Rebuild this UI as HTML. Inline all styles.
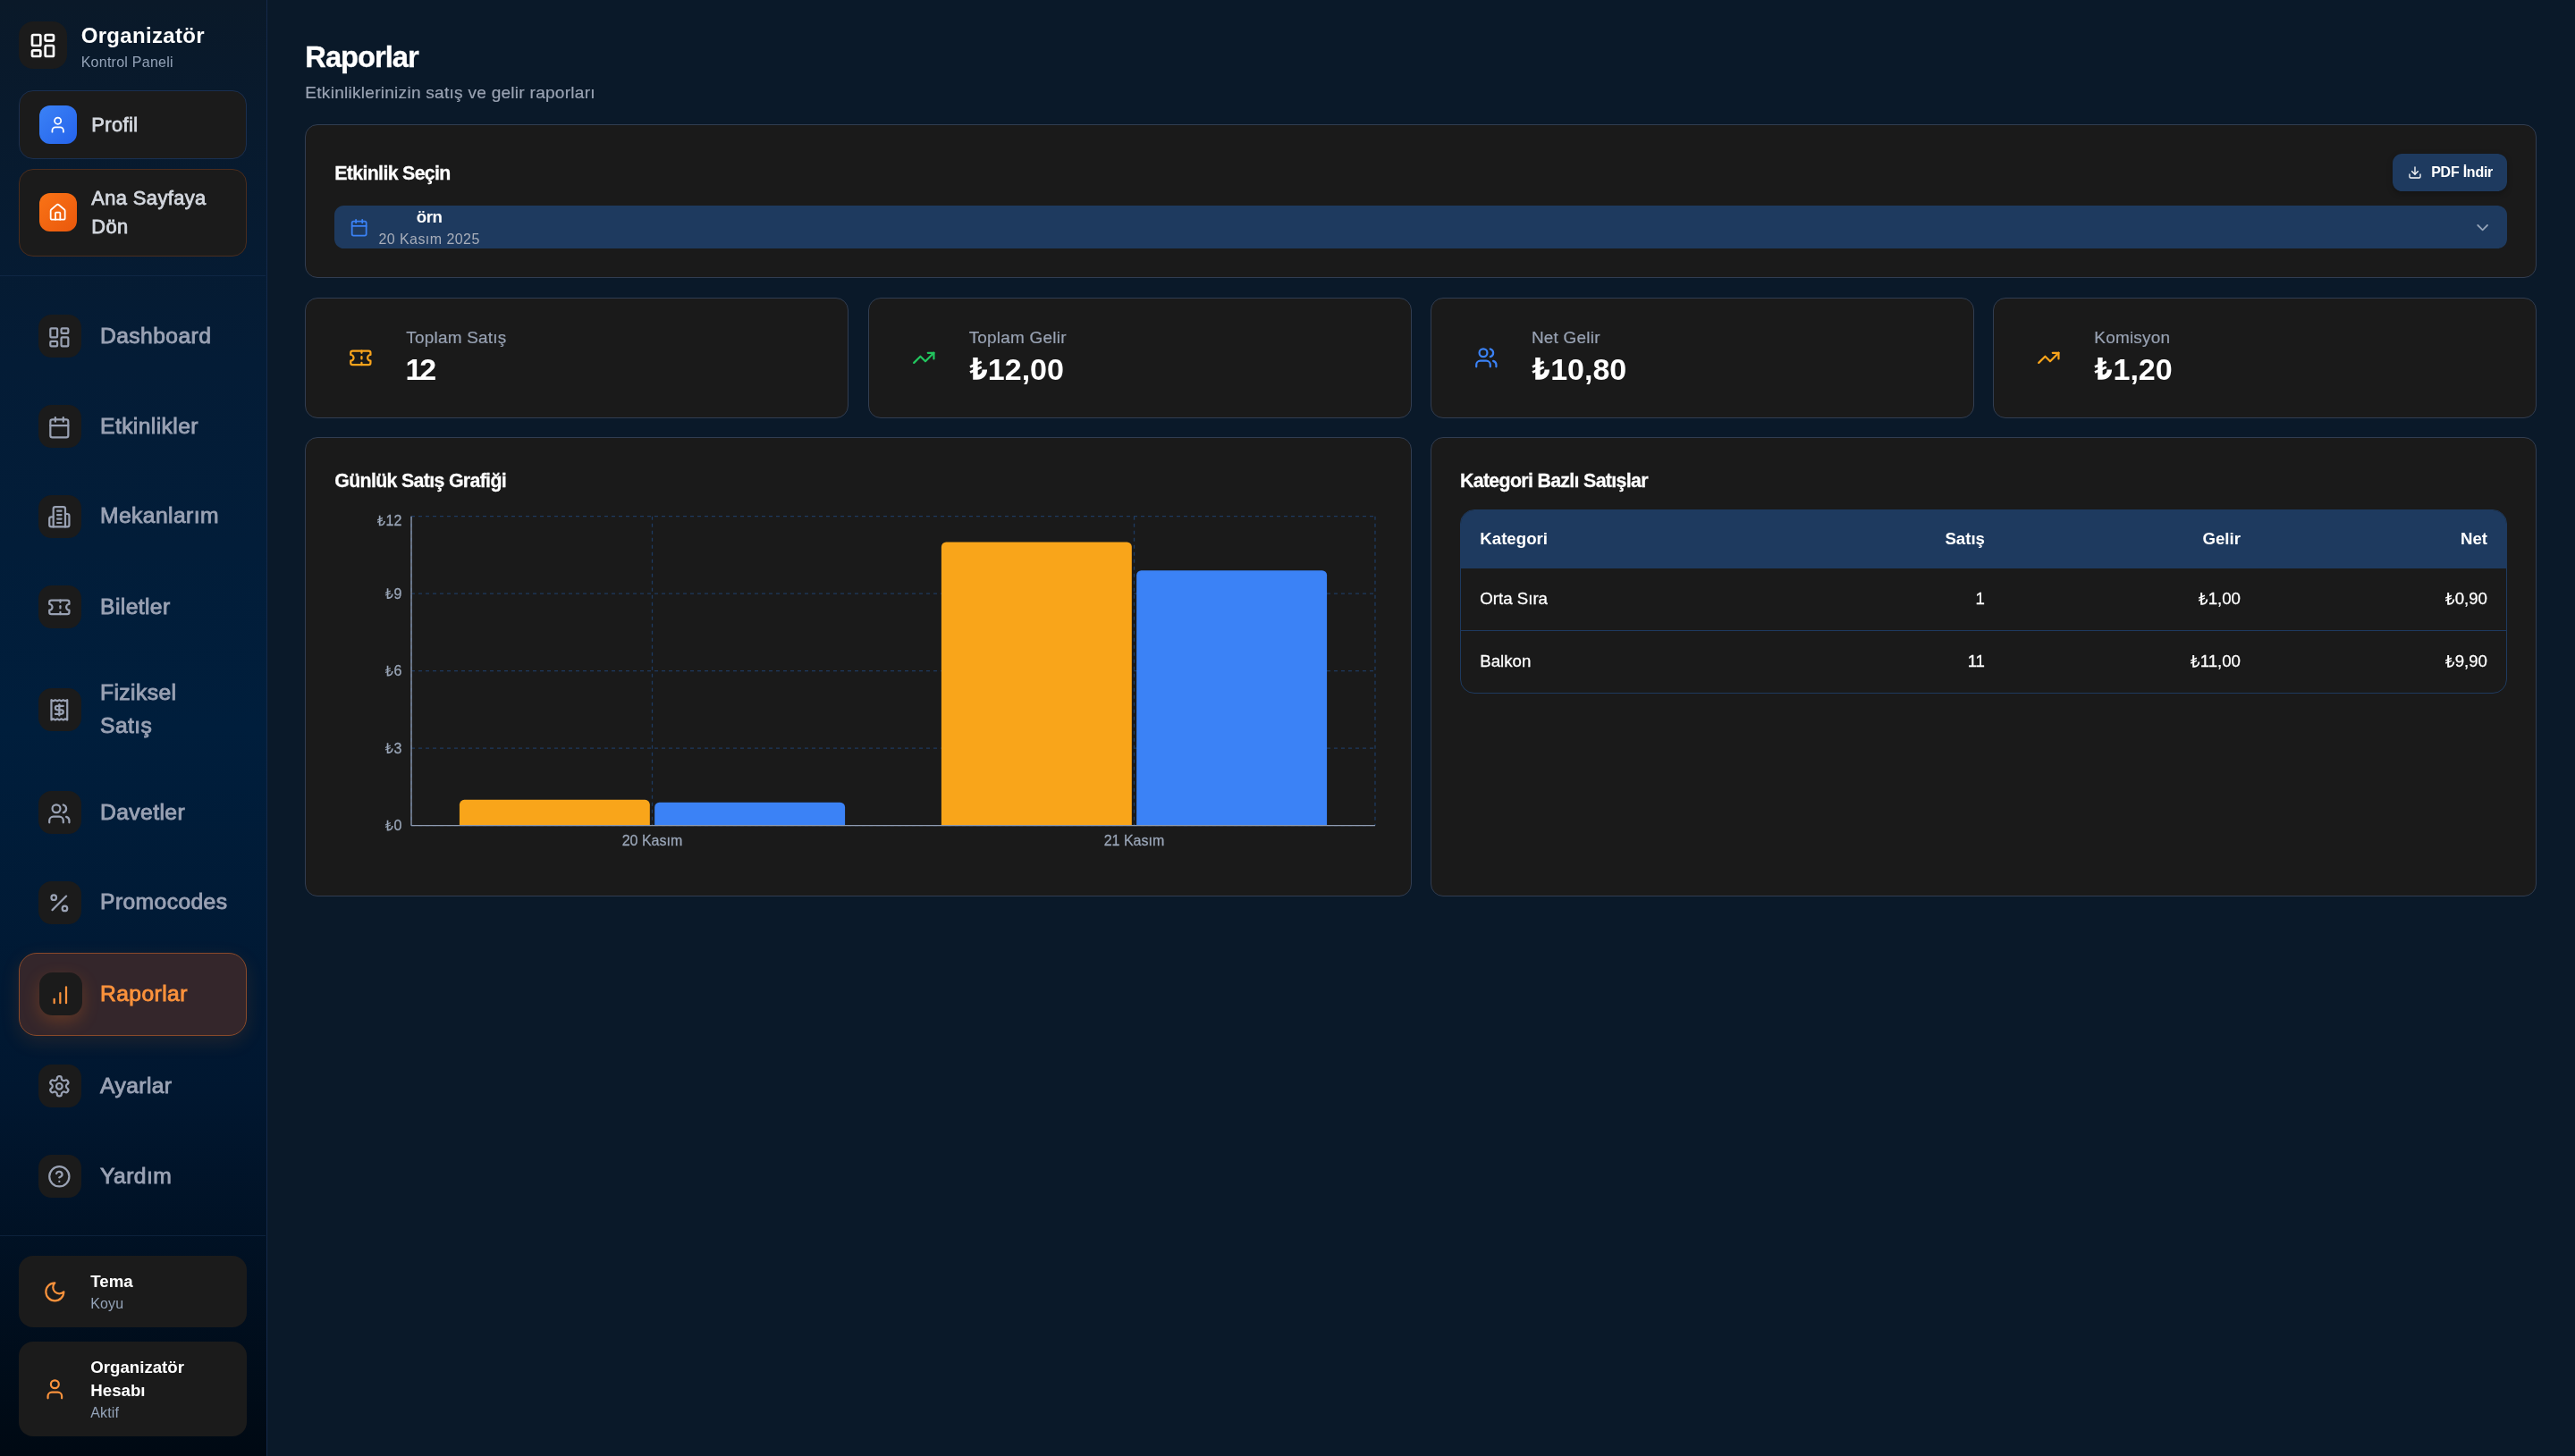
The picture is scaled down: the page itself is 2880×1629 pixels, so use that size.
<!DOCTYPE html>
<html lang="tr">
<head>
<meta charset="utf-8">
<title>Raporlar</title>
<style>
*{box-sizing:border-box;margin:0;padding:0}
html,body{width:2880px;height:1629px;overflow:hidden;background:#0a1929}
body{font-family:"Liberation Sans",sans-serif;color:#fff;-webkit-font-smoothing:antialiased}
#app{will-change:transform;zoom:1.3333333;position:relative;width:2160px;height:1221.75px;overflow:hidden;
 background:#0a1929}
svg.i{fill:none;stroke:currentColor;stroke-width:2;stroke-linecap:round;stroke-linejoin:round;display:block}
/* sidebar */
#sb{position:absolute;left:0;top:0;width:224px;height:1221.75px;border-right:1px solid #14294a;
 background:linear-gradient(180deg,#0a1929 0%,#041c36 25%,#001e3c 50%,#011730 75%,#000913 100%)}
.hd{position:absolute;left:16px;top:16px;display:flex;align-items:center;gap:12px}
.logo{width:40px;height:40px;border-radius:12px;background:#1b1b1b;display:flex;align-items:center;justify-content:center;color:#fff}
.hd b{display:block;font-size:18px;line-height:28px;font-weight:700;color:#fff;letter-spacing:.26px}
.hd span{display:block;font-size:12px;line-height:16px;color:#94a3b8;letter-spacing:.2px}
.qb{position:absolute;left:16px;width:191px;border-radius:12px;background:#1b1b1b;border:1px solid #1a2f4f;display:flex;align-items:center;gap:12px;padding:12px 16px;font-size:16.4px;line-height:24px;font-weight:400;-webkit-text-stroke:.6px currentColor;letter-spacing:.3px;color:#d3d7de}
.qi{width:32px;height:32px;border-radius:9px;display:flex;align-items:center;justify-content:center;color:#fff;flex:none}
.sep{position:absolute;left:0;width:223px;height:1px;background:rgba(30,58,95,.4)}
.ni{position:absolute;left:16px;width:191px;height:70px;border-radius:15px;border:1px solid transparent;display:flex;align-items:center;gap:16px;padding:0 15.3px;font-size:18.5px;line-height:28px;font-weight:400;-webkit-text-stroke:.65px currentColor;letter-spacing:.3px;color:#9aa2b4}
.ni>div:last-child{position:relative;top:-.5px}
.nb svg{position:relative;top:.5px}
.nb{width:36px;height:36px;border-radius:11px;background:#1b1b1b;display:flex;align-items:center;justify-content:center;flex:none}
.ni.act{background:#34262b;border-color:#8a4a2a;color:#fb923c;box-shadow:0 5px 16px rgba(249,115,22,.13)}
.ni.act .nb{box-shadow:0 5px 14px rgba(249,115,22,.24);position:relative;left:.8px}
.bb{position:absolute;left:16px;width:191px;border-radius:12px;background:#1b1b1b;display:flex;align-items:center;gap:12px;padding:12px}
.bi{width:36px;height:36px;display:flex;align-items:center;justify-content:center;color:#fb923c;flex:none}
.bb b{display:block;font-size:14px;line-height:20px;font-weight:700;color:#fff}
.bb span{display:block;font-size:12px;line-height:16px;color:#94a3b8;letter-spacing:.1px}
/* main */
h1{position:absolute;left:256px;top:32px;font-size:24.5px;line-height:32px;font-weight:700;color:#fff;letter-spacing:-.75px;-webkit-text-stroke:.25px #fff}
.sub{position:absolute;left:256px;top:68px;font-size:14.3px;line-height:20px;color:#9aa3b3;letter-spacing:.2px;-webkit-text-stroke:.15px currentColor}
.card{position:absolute;background:#1a1a1a;border:1px solid #313d51;border-radius:10.5px}
.ct{position:absolute;left:24px;font-size:16px;line-height:24px;font-weight:700;color:#fff;white-space:nowrap;letter-spacing:-.5px;-webkit-text-stroke:.2px #fff}

.lira{display:inline-block;width:.56em;height:.73em;vertical-align:baseline;fill:none;stroke:currentColor;stroke-linecap:butt;stroke-linejoin:miter;overflow:visible;margin-right:.03em;margin-left:.035em}
.pdf{position:absolute;right:24px;top:24px;width:96px;height:32px;border-radius:8px;background:#1e3a5f;display:flex;align-items:center;justify-content:center;gap:8px;font-size:12px;line-height:16px;font-weight:700;color:#fff;letter-spacing:-.18px;box-shadow:0 2px 5px rgba(0,0,0,.25)}
.sel{position:absolute;left:24px;right:24px;top:68px;height:36px;border-radius:8px;background:#1e3a5f;color:#fff}
.sel .c{position:absolute;left:12.7px;top:10px;color:#3b82f6}
.sel .t{position:absolute;left:36.8px;top:0;text-align:center}
.sel .t b{display:block;font-size:14px;line-height:20px;font-weight:700;letter-spacing:-.3px}
.sel .t span{display:block;font-size:12px;line-height:16px;color:#a8aeba;white-space:nowrap;letter-spacing:.34px}
.sel .v{position:absolute;right:12.8px;top:10px;color:#94a3b8}
.st{display:flex;align-items:center;gap:16px;padding:0 24px}
.st .ic{width:44px;height:44px;display:flex;align-items:center;justify-content:center;flex:none}
.st .l{font-size:14.2px;line-height:20px;color:#98a2b3;letter-spacing:.18px;position:relative;top:-.6px;-webkit-text-stroke:.15px currentColor}
.st .v{font-size:25.5px;line-height:32px;font-weight:700;color:#fff;letter-spacing:-2.4px;margin-left:-.6px;white-space:nowrap;position:relative;top:-.5px}
.st .v.sx{letter-spacing:0;margin-left:0}

.ax{font-size:12px;fill:#9aa6b8;stroke:#9aa6b8;stroke-width:.2px;font-family:"Liberation Sans",sans-serif}
.tb{position:absolute;left:24px;right:24px;top:60px;height:154.6px;border:1px solid #1e3a5f;border-radius:12px;overflow:hidden;font-size:14px;line-height:20px}
.tr{position:relative;height:52.7px;-webkit-text-stroke:.2px currentColor;border-bottom:1px solid #1e3a5f;color:#fff}
.tr.h{height:48.3px;-webkit-text-stroke:0;background:#1e3a5f;border:0;font-weight:700}
.tr:last-child{border-bottom:0}
.tr div{position:absolute;top:16.1px;white-space:nowrap}
.tr.h div{top:14px}
.tr .c1{left:16px}.tr .c2{right:437.5px}.tr .c3{right:223px}.tr .c4{right:16px}
svg .lg{stroke:#9aa6b8;fill:none;overflow:visible}
</style>
</head>
<body>
<div id="app">
<svg width="0" height="0" style="position:absolute">
<defs>
<symbol id="dash" viewBox="0 0 24 24"><rect width="7" height="9" x="3" y="3" rx="1"/><rect width="7" height="5" x="14" y="3" rx="1"/><rect width="7" height="9" x="14" y="12" rx="1"/><rect width="7" height="5" x="3" y="16" rx="1"/></symbol>
<symbol id="cal" viewBox="0 0 24 24"><path d="M8 2v4"/><path d="M16 2v4"/><rect width="18" height="18" x="3" y="4" rx="2"/><path d="M3 10h18"/></symbol>
<symbol id="bld" viewBox="0 0 24 24"><path d="M6 22V4a2 2 0 0 1 2-2h8a2 2 0 0 1 2 2v18Z"/><path d="M6 12H4a2 2 0 0 0-2 2v6a2 2 0 0 0 2 2h2"/><path d="M18 9h2a2 2 0 0 1 2 2v9a2 2 0 0 1-2 2h-2"/><path d="M10 6h4"/><path d="M10 10h4"/><path d="M10 14h4"/><path d="M10 18h4"/></symbol>
<symbol id="tic" viewBox="0 0 24 24"><path d="M2 9a3 3 0 0 1 0 6v2a2 2 0 0 0 2 2h16a2 2 0 0 0 2-2v-2a3 3 0 0 1 0-6V7a2 2 0 0 0-2-2H4a2 2 0 0 0-2 2Z"/><path d="M13 5v2"/><path d="M13 17v2"/><path d="M13 11v2"/></symbol>
<symbol id="rec" viewBox="0 0 24 24"><path d="M4 2v20l2-1 2 1 2-1 2 1 2-1 2 1 2-1 2 1V2l-2 1-2-1-2 1-2-1-2 1-2-1-2 1Z"/><path d="M16 8h-6a2 2 0 1 0 0 4h4a2 2 0 1 1 0 4H8"/><path d="M12 17.5v-11"/></symbol>
<symbol id="usr2" viewBox="0 0 24 24"><path d="M16 21v-2a4 4 0 0 0-4-4H6a4 4 0 0 0-4 4v2"/><circle cx="9" cy="7" r="4"/><path d="M22 21v-2a4 4 0 0 0-3-3.87"/><path d="M16 3.13a4 4 0 0 1 0 7.75"/></symbol>
<symbol id="pct" viewBox="0 0 24 24"><line x1="19" x2="5" y1="5" y2="19"/><circle cx="6.5" cy="6.5" r="2.5"/><circle cx="17.5" cy="17.5" r="2.5"/></symbol>
<symbol id="bar" viewBox="0 0 24 24"><line x1="12" x2="12" y1="20" y2="10"/><line x1="18" x2="18" y1="20" y2="4"/><line x1="6" x2="6" y1="20" y2="16"/></symbol>
<symbol id="set" viewBox="0 0 24 24"><path d="M12.22 2h-.44a2 2 0 0 0-2 2v.18a2 2 0 0 1-1 1.73l-.43.25a2 2 0 0 1-2 0l-.15-.08a2 2 0 0 0-2.73.73l-.22.38a2 2 0 0 0 .73 2.73l.15.1a2 2 0 0 1 1 1.72v.51a2 2 0 0 1-1 1.74l-.15.09a2 2 0 0 0-.73 2.73l.22.38a2 2 0 0 0 2.73.73l.15-.08a2 2 0 0 1 2 0l.43.25a2 2 0 0 1 1 1.73V20a2 2 0 0 0 2 2h.44a2 2 0 0 0 2-2v-.18a2 2 0 0 1 1-1.73l.43-.25a2 2 0 0 1 2 0l.15.08a2 2 0 0 0 2.73-.73l.22-.39a2 2 0 0 0-.73-2.73l-.15-.08a2 2 0 0 1-1-1.74v-.5a2 2 0 0 1 1-1.74l.15-.09a2 2 0 0 0 .73-2.73l-.22-.38a2 2 0 0 0-2.73-.73l-.15.08a2 2 0 0 1-2 0l-.43-.25a2 2 0 0 1-1-1.73V4a2 2 0 0 0-2-2z"/><circle cx="12" cy="12" r="3"/></symbol>
<symbol id="hlp" viewBox="0 0 24 24"><circle cx="12" cy="12" r="10"/><path d="M9.09 9a3 3 0 0 1 5.83 1c0 2-3 3-3 3"/><path d="M12 17h.01"/></symbol>
<symbol id="moon" viewBox="0 0 24 24"><path d="M12 3a6 6 0 0 0 9 9 9 9 0 1 1-9-9Z"/></symbol>
<symbol id="usr" viewBox="0 0 24 24"><path d="M19 21v-2a4 4 0 0 0-4-4H9a4 4 0 0 0-4 4v2"/><circle cx="12" cy="7" r="4"/></symbol>
<symbol id="home" viewBox="0 0 24 24"><path d="M15 21v-8a1 1 0 0 0-1-1h-4a1 1 0 0 0-1 1v8"/><path d="M3 10a2 2 0 0 1 .709-1.528l7-5.999a2 2 0 0 1 2.582 0l7 5.999A2 2 0 0 1 21 10v9a2 2 0 0 1-2 2H5a2 2 0 0 1-2-2z"/></symbol>
<symbol id="dl" viewBox="0 0 24 24"><path d="M21 15v4a2 2 0 0 1-2 2H5a2 2 0 0 1-2-2v-4"/><polyline points="7 10 12 15 17 10"/><line x1="12" x2="12" y1="15" y2="3"/></symbol>
<symbol id="chev" viewBox="0 0 24 24"><path d="m6 9 6 6 6-6"/></symbol>
<symbol id="trend" viewBox="0 0 24 24"><polyline points="22 7 13.5 15.5 8.5 10.5 2 17"/><polyline points="16 7 22 7 22 13"/></symbol>
<symbol id="lira" viewBox="0 0 56 73" overflow="visible"><path d="M17 0V67.8H23C37.5 67.8 50 57.5 50 40" stroke-width="10.5"/><path d="M1 33L37.5 17.5" stroke-width="8"/><path d="M1 48.5L37.5 33" stroke-width="8"/></symbol>
<symbol id="lirab" viewBox="0 0 56 73" overflow="visible"><path d="M17.5 0V65H23C37 65 48 55.5 48 40" stroke-width="16"/><path d="M0 31L37.5 14" stroke-width="8.5"/><path d="M0 48.5L37.5 31.5" stroke-width="8.5"/></symbol>
</defs>
</svg>

<!-- SIDEBAR -->
<div id="sb">
 <div class="hd"><div class="logo"><svg class="i" width="24" height="24"><use href="#dash"/></svg></div><div><b>Organizatör</b><span>Kontrol Paneli</span></div></div>
 <div class="qb" style="top:76px"><div class="qi" style="background:linear-gradient(135deg,#3b82f6,#2563eb)"><svg class="i" width="16" height="16"><use href="#usr"/></svg></div><div>Profil</div></div>
 <div class="qb" style="top:142px;border-color:#4a2d1e"><div class="qi" style="position:relative;top:-.7px;background:linear-gradient(135deg,#f97316,#ea580c)"><svg class="i" width="16" height="16"><use href="#home"/></svg></div><div>Ana Sayfaya<br>Dön</div></div>
 <div class="sep" style="top:231px"></div>

 <div class="ni" style="top:247.2px"><div class="nb"><svg class="i" width="20" height="20"><use href="#dash"/></svg></div><div>Dashboard</div></div>
 <div class="ni" style="top:322.9px"><div class="nb"><svg class="i" width="20" height="20"><use href="#cal"/></svg></div><div>Etkinlikler</div></div>
 <div class="ni" style="top:398.3px"><div class="nb"><svg class="i" width="20" height="20"><use href="#bld"/></svg></div><div>Mekanlarım</div></div>
 <div class="ni" style="top:474.3px"><div class="nb"><svg class="i" width="20" height="20"><use href="#tic"/></svg></div><div>Biletler</div></div>
 <div class="ni" style="top:550.5px;height:90px"><div class="nb"><svg class="i" width="20" height="20"><use href="#rec"/></svg></div><div>Fiziksel<br>Satış</div></div>
 <div class="ni" style="top:647px"><div class="nb"><svg class="i" width="20" height="20"><use href="#usr2"/></svg></div><div>Davetler</div></div>
 <div class="ni" style="top:722.3px"><div class="nb"><svg class="i" width="20" height="20"><use href="#pct"/></svg></div><div>Promocodes</div></div>
 <div class="ni act" style="top:799.2px"><div class="nb"><svg class="i" width="20" height="20"><use href="#bar"/></svg></div><div>Raporlar</div></div>
 <div class="ni" style="top:876.3px"><div class="nb"><svg class="i" width="20" height="20"><use href="#set"/></svg></div><div>Ayarlar</div></div>
 <div class="ni" style="top:952.1px"><div class="nb"><svg class="i" width="20" height="20"><use href="#hlp"/></svg></div><div>Yardım</div></div>

 <div class="sep" style="top:1036.5px"></div>
 <div class="bb" style="top:1053.75px;height:60px"><div class="bi"><svg class="i" width="20" height="20"><use href="#moon"/></svg></div><div><b>Tema</b><span>Koyu</span></div></div>
 <div class="bb" style="top:1125.75px;height:79.5px"><div class="bi"><svg class="i" width="20" height="20"><use href="#usr"/></svg></div><div><b>Organizatör<br>Hesabı</b><span>Aktif</span></div></div>
</div>

<!-- MAIN -->
<h1>Raporlar</h1>
<div class="sub">Etkinliklerinizin satış ve gelir raporları</div>

<div class="card" style="left:256px;top:104px;width:1872px;height:129.5px">
 <div class="ct" style="top:28.5px">Etkinlik Seçin</div>
 <div class="pdf"><svg class="i" width="12" height="12"><use href="#dl"/></svg><span>PDF İndir</span></div>
 <div class="sel"><svg class="i c" width="16" height="16"><use href="#cal"/></svg><div class="t"><b>örn</b><span>20 Kasım 2025</span></div><svg class="i v" width="16" height="16"><use href="#chev"/></svg></div>
</div>
<div class="card st" style="left:256px;top:250px;width:456px;height:101px"><div class="ic" style="color:#f9a41c"><svg class="i" width="20" height="20"><use href="#tic"/></svg></div><div><div class="l">Toplam Satış</div><div class="v bold">12</div></div></div>
<div class="card st" style="left:728px;top:250px;width:456px;height:101px"><div class="ic" style="color:#22c55e"><svg class="i" width="20" height="20"><use href="#trend"/></svg></div><div><div class="l">Toplam Gelir</div><div class="v bold sx"><svg class="lira"><use href="#lirab"/></svg>12,00</div></div></div>
<div class="card st" style="left:1200px;top:250px;width:456px;height:101px"><div class="ic" style="color:#3b82f6"><svg class="i" width="20" height="20"><use href="#usr2"/></svg></div><div><div class="l">Net Gelir</div><div class="v bold sx"><svg class="lira"><use href="#lirab"/></svg>10,80</div></div></div>
<div class="card st" style="left:1672px;top:250px;width:456px;height:101px"><div class="ic" style="color:#f9a41c"><svg class="i" width="20" height="20"><use href="#trend"/></svg></div><div><div class="l">Komisyon</div><div class="v bold sx"><svg class="lira"><use href="#lirab"/></svg>1,20</div></div></div>
<div class="card" style="left:256px;top:367px;width:928px;height:385.5px">
 <div class="ct" style="top:24px">Günlük Satış Grafiği</div>
 <svg style="position:absolute;left:24px;top:60.4px" width="878" height="300" viewBox="0 0 878 300">
  <g stroke="#1e3a5f" stroke-width="1" stroke-dasharray="3 3" fill="none"><line x1="64.5" x2="873" y1="264.50" y2="264.50"/><line x1="64.5" x2="873" y1="199.62" y2="199.62"/><line x1="64.5" x2="873" y1="134.75" y2="134.75"/><line x1="64.5" x2="873" y1="69.88" y2="69.88"/><line x1="64.5" x2="873" y1="5.00" y2="5.00"/><line x1="64.50" x2="64.50" y1="5" y2="264.5"/><line x1="266.62" x2="266.62" y1="5" y2="264.5"/><line x1="670.88" x2="670.88" y1="5" y2="264.5"/><line x1="873.00" x2="873.00" y1="5" y2="264.5"/></g>
  <path d="M104.93 264.5V246.88a4 4 0 0 1 4 -4H260.62a4 4 0 0 1 4 4V264.5Z" fill="#f9a51a"/><path d="M268.62 264.5V249.04a4 4 0 0 1 4 -4H424.32a4 4 0 0 1 4 4V264.5Z" fill="#3b82f6"/><path d="M509.18 264.5V30.62a4 4 0 0 1 4 -4H664.88a4 4 0 0 1 4 4V264.5Z" fill="#f9a51a"/><path d="M672.88 264.5V54.41a4 4 0 0 1 4 -4H828.58a4 4 0 0 1 4 4V264.5Z" fill="#3b82f6"/>
  <g stroke="#8f9bb0" stroke-width="1" fill="none"><line x1="64.5" x2="64.5" y1="5" y2="264.5"/><line x1="64.5" x2="873" y1="264.5" y2="264.5"/></g>
  <text class="ax" x="56.5" y="268.80" text-anchor="end">0</text>
  <svg class="lg" x="42.61" y="260.04" width="6.72" height="8.76"><use href="#lira"/></svg>
  <text class="ax" x="56.5" y="203.93" text-anchor="end">3</text>
  <svg class="lg" x="42.61" y="195.17" width="6.72" height="8.76"><use href="#lira"/></svg>
  <text class="ax" x="56.5" y="139.05" text-anchor="end">6</text>
  <svg class="lg" x="42.61" y="130.29" width="6.72" height="8.76"><use href="#lira"/></svg>
  <text class="ax" x="56.5" y="74.17" text-anchor="end">9</text>
  <svg class="lg" x="42.61" y="65.41" width="6.72" height="8.76"><use href="#lira"/></svg>
  <text class="ax" x="56.5" y="13.00" text-anchor="end">12</text>
  <svg class="lg" x="35.94" y="4.24" width="6.72" height="8.76"><use href="#lira"/></svg>
  <text class="ax" x="266.62" y="281" text-anchor="middle">20 Kasım</text><text class="ax" x="670.88" y="281" text-anchor="middle">21 Kasım</text>
 </svg>
</div>
<div class="card" style="left:1200px;top:367px;width:928px;height:385.5px">
 <div class="ct" style="top:24px">Kategori Bazlı Satışlar</div>
 <div class="tb">
  <div class="tr h"><div class="c1">Kategori</div><div class="c2">Satış</div><div class="c3">Gelir</div><div class="c4">Net</div></div>
  <div class="tr"><div class="c1">Orta Sıra</div><div class="c2">1</div><div class="c3"><svg class="lira"><use href="#lira"/></svg>1,00</div><div class="c4"><svg class="lira"><use href="#lira"/></svg>0,90</div></div>
  <div class="tr"><div class="c1">Balkon</div><div class="c2">11</div><div class="c3"><svg class="lira"><use href="#lira"/></svg>11,00</div><div class="c4"><svg class="lira"><use href="#lira"/></svg>9,90</div></div>
 </div>
</div>
</div>
</body>
</html>
